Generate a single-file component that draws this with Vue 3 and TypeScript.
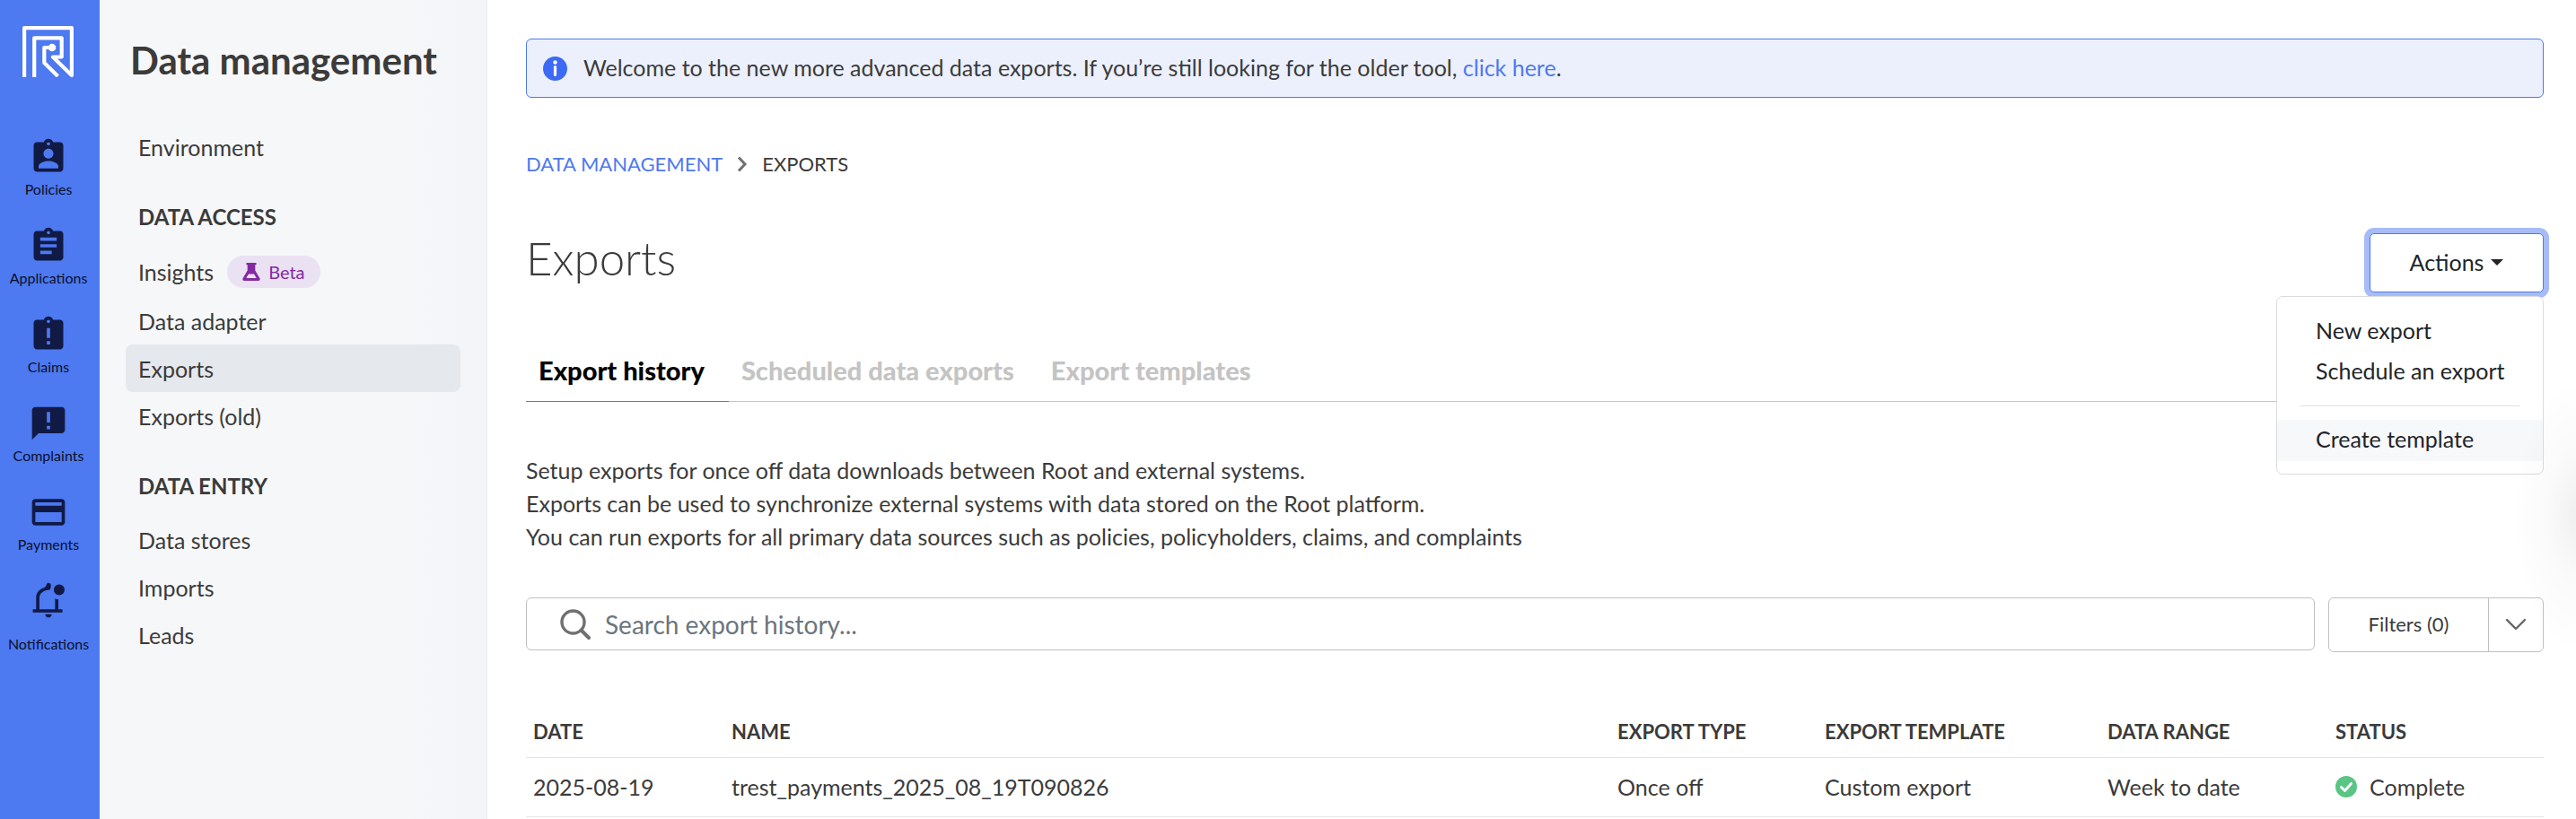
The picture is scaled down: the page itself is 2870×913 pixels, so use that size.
<script setup lang="ts">
import { ref } from 'vue'

interface NavItem { label: string; icon: string; gap?: boolean }
const nav: NavItem[] = [
  { label: 'Policies', icon: 'M19 3h-4.180C14.400 1.840 13.300 1 12 1c-1.300 0-2.400.84-2.820 2H5c-1.100 0-2 .9-2 2v14c0 1.100.9 2 2 2h14c1.100 0 2-.9 2-2V5c0-1.100-.9-2-2-2zm-7 0c.55 0 1 .45 1 1s-.45 1-1 1-1-.45-1-1 .45-1 1-1zm0 4c1.660 0 3 1.340 3 3s-1.340 3-3 3-3-1.340-3-3 1.340-3 3-3zm6 12H6v-1.400c0-2 4-3.100 6-3.100s6 1.100 6 3.100V19z' },
  { label: 'Applications', icon: 'M19 3h-4.180C14.400 1.840 13.300 1 12 1c-1.300 0-2.400.84-2.820 2H5c-1.100 0-2 .9-2 2v14c0 1.100.9 2 2 2h14c1.100 0 2-.9 2-2V5c0-1.100-.9-2-2-2zm-7 0c.55 0 1 .45 1 1s-.45 1-1 1-1-.45-1-1 .45-1 1-1zm2 14H7v-2h7v2zm3-4H7v-2h10v2zm0-4H7V7h10v2z' },
  { label: 'Claims', icon: 'M19 3h-4.180C14.400 1.840 13.300 1 12 1s-2.400.84-2.820 2H5c-1.100 0-2 .9-2 2v14c0 1.100.9 2 2 2h14c1.100 0 2-.9 2-2V5c0-1.100-.9-2-2-2zm-6 15h-2v-2h2v2zm0-4h-2V8h2v6zm-1-9c-.55 0-1-.45-1-1s.45-1 1-1 1 .45 1 1-.45 1-1 1z' },
  { label: 'Complaints', icon: 'M20 2H4c-1.100 0-1.990.9-1.990 2L2 22l4-4h14c1.100 0 2-.9 2-2V4c0-1.100-.9-2-2-2zm-7 13.500h-2v-2h2v2zm0-4h-2V5h2v6.500z' },
  { label: 'Payments', icon: 'M20 4H4c-1.110 0-1.990.89-1.990 2L2 18c0 1.110.89 2 2 2h16c1.110 0 2-.89 2-2V6c0-1.110-.89-2-2-2zm0 14H4v-6h16v6zm0-10H4V6h16v2z' },
  { label: 'Notifications', icon: 'M2.500 19v-2h2v-7c0-2.800 1.700-5.200 4.500-5.900L10.500 3C10.500 2.200 11.200 1 12 1c.8 0 1.500.7 1.500 1.500v.9c-.3.600-.500 1.200-.5 1.800C9 5.200 6.500 7.500 6.500 10v7H16v-6.500c.6.300 1.300.5 2 .5v6h2.500v2zM12 22c-1.100 0-2-.9-2-2h4c0 1.100-.9 2-2 2zm6.500-13.500a3.300 3.300 0 1 1 0-6.600 3.300 3.300 0 0 1 0 6.600z', gap: true },
]

interface Link { label: string; beta?: boolean; active?: boolean }
const groups: { title: string; links: Link[] }[] = [
  { title: 'DATA ACCESS', links: [{ label: 'Insights', beta: true }, { label: 'Data adapter' }, { label: 'Exports', active: true }, { label: 'Exports (old)' }] },
  { title: 'DATA ENTRY', links: [{ label: 'Data stores' }, { label: 'Imports' }, { label: 'Leads' }] },
]

const tabs = ['Export history', 'Scheduled data exports', 'Export templates']
const activeTab = ref(tabs[0])
const menuOpen = ref(true)
const search = ref('')
const columns = ['DATE', 'NAME', 'EXPORT TYPE', 'EXPORT TEMPLATE', 'DATA RANGE', 'STATUS']
const rows = [
  { date: '2025-08-19', name: 'trest_payments_2025_08_19T090826', type: 'Once off', template: 'Custom export', range: 'Week to date', status: 'Complete' },
]
</script>

<template>
  <div class="app">
    <nav class="rail" aria-label="Main">
      <a href="#" class="logo" aria-label="Root">
        <svg viewBox="0 0 57 57" fill="none" stroke="#fff" stroke-width="4.200" stroke-linejoin="round">
          <path d="M2.100 57V2.100H54.900V55L34 34.500H43.700V13.300H13.200V57" />
          <path d="M33 24H24.300V41L39.500 56" />
          <circle cx="33" cy="24" r="4.300" fill="#fff" stroke="none" />
        </svg>
      </a>
      <a v-for="n in nav" :key="n.label" href="#" class="rail-item" :class="{ spaced: n.gap }">
        <svg viewBox="0 0 24 24" fill="#111a45" fill-rule="evenodd"><path :d="n.icon" /></svg>
        <span>{{ n.label }}</span>
      </a>
    </nav>

    <aside class="sidebar">
      <h2>Data management</h2>
      <a href="#" class="side-link">Environment</a>
      <section v-for="g in groups" :key="g.title">
        <h3>{{ g.title }}</h3>
        <a v-for="l in g.links" :key="l.label" href="#" class="side-link" :class="{ active: l.active, tall: l.beta }">
          {{ l.label }}
          <span v-if="l.beta" class="beta">
            <svg viewBox="0 0 20 20" fill="#832aa3"><path fill-rule="evenodd" d="M4.500 0h11v2.200h-1.200v6.300l5 8.500c.9 1.600.2 3-1.500 3H2.200c-1.700 0-2.400-1.400-1.500-3l5-8.500V2.200H4.500zM7 12.500 4.300 17h11.400L13 12.500z" /></svg>
            Beta
          </span>
        </a>
      </section>
    </aside>

    <main class="content">
      <div class="banner" role="status">
        <svg viewBox="0 0 27 27"><circle cx="13.500" cy="13.500" r="13.500" fill="#3c6af5" /><circle cx="13.500" cy="6.500" r="2.200" fill="#fff" /><path d="M13.500 11.500v9" stroke="#fff" stroke-width="3.200" stroke-linecap="round" /></svg>
        <p>Welcome to the new more advanced data exports. If you’re still looking for the older tool, <a href="#">click here</a>.</p>
      </div>

      <nav class="crumbs" aria-label="Breadcrumb">
        <a href="#">DATA MANAGEMENT</a>
        <svg viewBox="0 0 12 18" fill="none" stroke="#707070" stroke-width="3"><path d="M2 1.500 9 9l-7 7.500" /></svg>
        <span>EXPORTS</span>
      </nav>

      <header class="heading">
        <h1>Exports</h1>
        <div class="actions">
          <button type="button" class="actions-btn" :aria-expanded="menuOpen" @click="menuOpen = !menuOpen">Actions<i class="caret"></i></button>
          <div v-if="menuOpen" class="menu" role="menu">
            <button type="button" role="menuitem">New export</button>
            <button type="button" role="menuitem">Schedule an export</button>
            <hr />
            <button type="button" role="menuitem" class="hover">Create template</button>
          </div>
        </div>
      </header>

      <div class="tabs" role="tablist">
        <button v-for="t in tabs" :key="t" type="button" role="tab" :aria-selected="t === activeTab" :class="{ on: t === activeTab }" @click="activeTab = t">{{ t }}</button>
      </div>

      <p class="intro">
        Setup exports for once off data downloads between Root and external systems.<br />
        Exports can be used to synchronize external systems with data stored on the Root platform.<br />
        You can run exports for all primary data sources such as policies, policyholders, claims, and complaints
      </p>

      <div class="tools">
        <label class="search">
          <svg viewBox="0 0 34 34" fill="none" stroke="#707070"><circle cx="14.500" cy="14.500" r="12.500" stroke-width="3.400" /><path d="m23.500 23.500 8.500 8.500" stroke-width="4" stroke-linecap="round" /></svg>
          <input v-model="search" type="text" aria-label="Search export history" placeholder="Search export history..." />
        </label>
        <div class="filters">
          <button type="button">Filters (0)</button>
          <button type="button" class="drop" aria-label="Show filters">
            <svg viewBox="0 0 24 14" fill="none" stroke="#666" stroke-width="2.400" stroke-linecap="round" stroke-linejoin="round"><path d="m2 2 10 10L22 2" /></svg>
          </button>
        </div>
      </div>

      <table>
        <colgroup><col class="c-date" /><col /><col class="c-type" /><col class="c-template" /><col class="c-range" /><col class="c-status" /></colgroup>
        <thead><tr><th v-for="c in columns" :key="c" scope="col">{{ c }}</th></tr></thead>
        <tbody>
          <tr v-for="r in rows" :key="r.name">
            <td>{{ r.date }}</td><td>{{ r.name }}</td><td>{{ r.type }}</td><td>{{ r.template }}</td><td>{{ r.range }}</td>
            <td><span class="status"><svg viewBox="0 0 24 24"><circle cx="12" cy="12" r="12" fill="#5ac584" /><path d="m6.500 12.500 4 4 7-8" fill="none" stroke="#fff" stroke-width="2.800" stroke-linecap="round" stroke-linejoin="round" /></svg>{{ r.status }}</span></td>
          </tr>
        </tbody>
      </table>
    </main>
    <div class="edge-glow" aria-hidden="true"></div>
  </div>
</template>

<style>
body { margin: 0; background: #fff; }
</style>

<style scoped>
* { box-sizing: border-box; }
.app { position: relative; display: flex; min-height: 100vh; font-family: Lato, "Liberation Sans", sans-serif; font-size: 25px; color: #3b3b3b; }
svg { display: block; flex: none; }
h1, h2, h3, p { margin: 0; }
a { text-decoration: none; color: #4d79f0; }
button { font: inherit; color: inherit; background: none; border: 0; padding: 0; cursor: pointer; }

.rail { flex: none; width: 111px; background: #4d79f1; padding: 29px 3px 0 0; }
.logo { display: block; width: 57px; margin: 0 auto 67px 25px; }
.logo svg { width: 57px; height: 57px; }
.rail-item { display: flex; flex-direction: column; align-items: center; height: 99px; color: #0b1029; font-size: 16px; line-height: 24px; }
.rail-item svg { width: 44px; height: 44px; margin-bottom: 2px; }
.rail-item.spaced svg { margin-bottom: 14px; }

.sidebar { flex: none; width: 432px; padding: 39px 29px 0; border-right: 1px solid #ebecf0; background: linear-gradient(90deg, #f6f7f9 80%, #f3f4f8); }
h2 { font-size: 42px; line-height: 56px; padding-left: 5px; margin-bottom: 42px; }
.side-link { display: flex; align-items: center; height: 53px; padding: 0 14px; border-radius: 8px; color: #3b3b3b; }
.side-link.tall { height: 56px; }
.side-link.active { background: #e5e8ec; }
h3 { font-size: 24px; line-height: 30px; padding: 0 14px; margin: 37px 0 18px; }
.beta { display: inline-flex; align-items: center; gap: 9px; height: 36px; margin-left: 15px; padding: 0 17px; border-radius: 18px; background: #eae2f3; color: #832aa3; font-size: 20px; }
.beta svg { width: 20px; height: 20px; }

.content { flex: 1; min-width: 0; padding: 43px 36px 0 43px; }
.banner { display: flex; align-items: center; gap: 18px; height: 66px; padding: 0 18px; border: 1px solid #4d79f0; border-radius: 6px; background: #ecf0fd; }
.banner svg { width: 27px; height: 27px; }
.banner p { padding-bottom: 2px; }
.crumbs { display: flex; align-items: center; gap: 16px; margin-top: 58px; font-size: 22px; line-height: 32px; }
.crumbs svg { width: 12px; height: 18px; }

.heading { display: flex; justify-content: space-between; align-items: flex-start; margin-top: 61px; height: 66px; }
h1 { font-size: 51px; line-height: 56px; font-weight: 300; }
.actions { position: relative; z-index: 2; }
.actions-btn { display: flex; align-items: center; justify-content: center; gap: 8px; width: 194px; height: 66px; padding-bottom: 2px; border: 1px solid #4d79f0; border-radius: 5px; background: #fff; box-shadow: 0 0 0 6px #a6bbf8; color: #212529; }
.caret { border: 7px solid transparent; border-top-color: #212529; border-bottom: 0; }
.menu { position: absolute; right: 0; top: 70px; width: 298px; padding: 16px 0 14px; border: 1px solid #dcdcdc; border-radius: 7px; background: #fff; color: #212529; }
.menu button { display: block; width: 100%; height: 45px; padding: 0 0 4px 43px; text-align: left; white-space: nowrap; }
.menu .hover { background: #f7f8fa; height: 46px; }
.menu hr { margin: 15px 25px; border: 0; border-top: 1px solid #e2e2e2; }

.tabs { display: flex; margin-top: 52px; border-bottom: 1px solid #c4c4c4; }
.tabs button { height: 70px; margin-bottom: -1px; padding: 0 27px 0 14px; color: #c4c4c4; font-size: 29px; font-weight: 900; border-bottom: 1px solid transparent; }
.tabs .on { color: #000; border-color: #4d79f0; }

.intro { margin-top: 58px; line-height: 37px; }

.tools { display: flex; align-items: flex-start; gap: 15px; margin-top: 49px; }
.search { display: flex; flex: 1; align-items: center; gap: 16px; height: 59px; padding: 0 37px; border: 1px solid #c0c0c0; border-radius: 6px; }
.search svg { width: 34px; height: 34px; }
.search input { flex: 1; border: 0; outline: 0; padding: 0; background: none; font: inherit; font-size: 28px; color: #3b3b3b; }
.search input::placeholder { color: #6c757d; opacity: 1; }
.filters { display: flex; width: 240px; height: 61px; border: 1px solid #c0c0c0; border-radius: 6px; font-size: 22px; }
.filters button { flex: 1; padding-bottom: 2px; }
.filters .drop { display: flex; flex: none; align-items: center; justify-content: center; width: 61px; border-left: 1px solid #c0c0c0; }
.drop svg { width: 24px; height: 14px; }

table { width: 100%; margin-top: 64px; border-collapse: collapse; table-layout: fixed; }
.c-date { width: 221px; }
.c-type { width: 231px; }
.c-template { width: 315px; }
.c-range { width: 254px; }
.c-status { width: 240px; }
th { height: 53px; padding: 0 8px 4px; text-align: left; font-size: 22px; border-bottom: 1px solid #e4e4e4; }
td { height: 66px; padding: 0 8px; border-bottom: 1px solid #e4e4e4; }
.status { display: flex; align-items: center; gap: 14px; }
.status svg { width: 24px; height: 24px; }

/* soft shadow that spills in from the right-hand edge */
.edge-glow { position: absolute; z-index: 3; top: 420px; right: 0; width: 70px; height: 310px; pointer-events: none; background: radial-gradient(ellipse 70px 155px at 100% 50%, rgba(0, 0, 0, 0.060), rgba(0, 0, 0, 0.020) 45%, transparent); }
</style>
